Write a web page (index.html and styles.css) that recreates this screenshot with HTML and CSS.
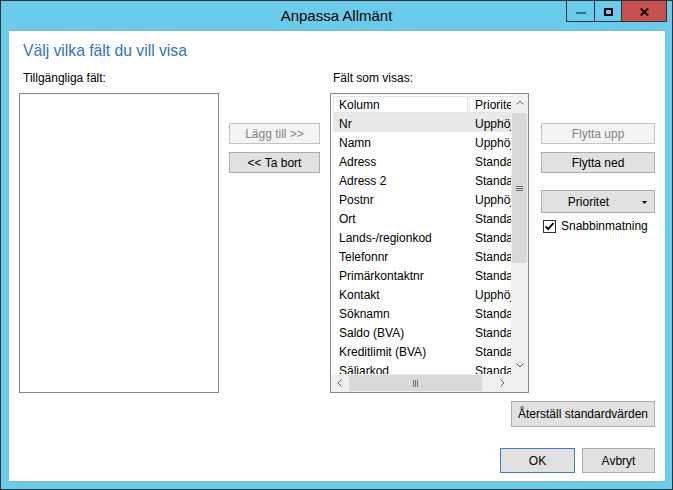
FILE: index.html
```html
<!DOCTYPE html>
<html lang="sv">
<head>
<meta charset="utf-8">
<title>Anpassa Allmänt</title>
<link rel="stylesheet" href="styles.css">
</head>
<body>
<div class="window">
  <div class="titlebar">
    <div class="title">Anpassa Allmänt</div>
    <div class="caption-buttons">
      <div class="cb cb-min"><span class="min-glyph"></span></div>
      <div class="cb cb-max"><span class="max-glyph"></span></div>
      <div class="cb cb-close">
        <svg class="close-glyph" width="9" height="8" viewBox="0 0 9 8"><path d="M0.8 0.6 L8.2 7.4 M8.2 0.6 L0.8 7.4" stroke="#000" stroke-width="2" fill="none"/></svg>
      </div>
    </div>
  </div>
  <div class="client">
    <h1 class="instruction">Välj vilka fält du vill visa</h1>
    <div class="main">
      <div class="label label-left">Tillgängliga fält:</div>
      <div class="label label-right">Fält som visas:</div>
      <div class="listbox"></div>
      <div class="mid-buttons">
        <button class="btn btn-mid btn-disabled">Lägg till &gt;&gt;</button>
        <button class="btn btn-mid">&lt;&lt; Ta bort</button>
      </div>
      <div class="listview">
        <div class="lv-content">
          <div class="lv-header">
            <div class="lv-hcell c1">Kolumn</div>
            <div class="lv-hcell c2">Prioritet</div>
          </div>
          <div class="lv-row sel"><span class="c1">Nr</span><span class="c2">Upphöjd</span></div>
          <div class="lv-row"><span class="c1">Namn</span><span class="c2">Upphöjd</span></div>
          <div class="lv-row"><span class="c1">Adress</span><span class="c2">Standard</span></div>
          <div class="lv-row"><span class="c1">Adress 2</span><span class="c2">Standard</span></div>
          <div class="lv-row"><span class="c1">Postnr</span><span class="c2">Upphöjd</span></div>
          <div class="lv-row"><span class="c1">Ort</span><span class="c2">Standard</span></div>
          <div class="lv-row"><span class="c1">Lands-/regionkod</span><span class="c2">Standard</span></div>
          <div class="lv-row"><span class="c1">Telefonnr</span><span class="c2">Standard</span></div>
          <div class="lv-row"><span class="c1">Primärkontaktnr</span><span class="c2">Standard</span></div>
          <div class="lv-row"><span class="c1">Kontakt</span><span class="c2">Upphöjd</span></div>
          <div class="lv-row"><span class="c1">Söknamn</span><span class="c2">Standard</span></div>
          <div class="lv-row"><span class="c1">Saldo (BVA)</span><span class="c2">Standard</span></div>
          <div class="lv-row"><span class="c1">Kreditlimit (BVA)</span><span class="c2">Standard</span></div>
          <div class="lv-row"><span class="c1">Säljarkod</span><span class="c2">Standard</span></div>
        </div>
        <div class="vscroll">
          <div class="sb-arrow"><svg width="8" height="5" viewBox="0 0 8 5"><polyline points="0.5,4.5 4,1 7.5,4.5" fill="none" stroke="#606060" stroke-width="1"/></svg></div>
          <div class="vthumb"><span class="vgrip"></span></div>
          <div class="sb-fill"></div>
          <div class="sb-arrow"><svg width="8" height="5" viewBox="0 0 8 5"><polyline points="0.5,0.5 4,4 7.5,0.5" fill="none" stroke="#606060" stroke-width="1"/></svg></div>
        </div>
        <div class="hscroll">
          <div class="sb-arrow sb-harrow"><svg width="5" height="8" viewBox="0 0 5 8"><polyline points="4.5,0.5 1,4 4.5,7.5" fill="none" stroke="#606060" stroke-width="1"/></svg></div>
          <div class="hthumb"><span class="hgrip"></span></div>
          <div class="sb-fill"></div>
          <div class="sb-arrow sb-harrow"><svg width="5" height="8" viewBox="0 0 5 8"><polyline points="0.5,0.5 4,4 0.5,7.5" fill="none" stroke="#606060" stroke-width="1"/></svg></div>
        </div>
        <div class="corner"></div>
      </div>
      <div class="side">
        <button class="btn btn-side btn-disabled">Flytta upp</button>
        <button class="btn btn-side btn-down">Flytta ned</button>
        <button class="btn btn-side btn-prio"><span class="prio-text">Prioritet</span><span class="prio-arrow"><svg width="5" height="3" viewBox="0 0 5 3"><polygon points="0,0 5,0 2.5,3" fill="#000"/></svg></span></button>
        <label class="check-row">
          <span class="checkbox"><svg width="11" height="11" viewBox="0 0 11 11"><path d="M1.6 5.4 L4.2 8.2 L9.4 2.2" fill="none" stroke="#000" stroke-width="1.9"/></svg></span>
          <span>Snabbinmatning</span>
        </label>
      </div>
    </div>
    <div class="reset-row"><button class="btn btn-reset">Återställ standardvärden</button></div>
    <div class="footer">
      <button class="btn btn-ok">OK</button>
      <button class="btn btn-cancel">Avbryt</button>
    </div>
  </div>
</div>
</body>
</html>
```
FILE: styles.css
```css
* { box-sizing: border-box; }
html, body { margin: 0; padding: 0; }
body {
  width: 673px;
  height: 490px;
  overflow: hidden;
  font-family: "Liberation Sans", Arial, sans-serif;
  font-size: 12px;
  color: #000;
  background: #333;
}
.window {
  width: 673px;
  height: 490px;
  border: 1px solid #333;
  background: #6acbea;
  display: flex;
  flex-direction: column;
}
.titlebar {
  flex: none;
  height: 29px;
  display: grid;
  grid-template-columns: 1fr auto 1fr;
}
.title {
  grid-column: 2;
  font-size: 15px;
  line-height: 28px;
  padding-top: 1px;
  white-space: nowrap;
  color: #000;
}
.caption-buttons {
  grid-column: 3;
  justify-self: end;
  align-self: start;
  margin-top: -1px;
  margin-right: 5px;
  height: 22px;
  display: flex;
  border: 1px solid #333;
}
.cb {
  height: 20px;
  display: flex;
  justify-content: center;
  align-items: flex-start;
}
.cb-min { width: 27px; }
.cb-max { width: 27px; border-left: 1px solid #333; }
.cb-close { width: 45px; border-left: 1px solid #333; background: #c75050; }
.min-glyph {
  width: 10px;
  height: 2px;
  margin-top: 11px;
  background: #356f87;
}
.max-glyph {
  width: 9px;
  height: 8px;
  margin-top: 7px;
  border: 2px solid #000;
}
.close-glyph { margin-top: 7px; display: block; }

.client {
  flex: none;
  height: 452px;
  margin: 0 7px 0 8px;
  background: #fff;
  border-top: 1px solid #78b4cf;
  border-bottom: 1px solid #78b4cf;
  padding: 10px 10px 8px 10px;
  display: flex;
  flex-direction: column;
}
.instruction {
  margin: 0;
  padding-left: 4px;
  font-size: 15.7px;
  line-height: 20px;
  font-weight: normal;
  color: #2f74c6;
}
.main {
  margin-top: 10px;
  display: grid;
  grid-template-columns: 200px 91px 199px 116px;
  grid-template-rows: 15px 300px;
  column-gap: 10px;
  row-gap: 7px;
}
.label { line-height: 15px; white-space: nowrap; }
.label-left { grid-column: 1; grid-row: 1; padding-left: 4px; }
.label-right { grid-column: 3; grid-row: 1; padding-left: 3px; }
.listbox {
  grid-column: 1;
  grid-row: 2;
  border: 1px solid #828790;
  background: #fff;
}
.mid-buttons {
  grid-column: 2;
  grid-row: 2;
  display: flex;
  flex-direction: column;
  padding-top: 30px;
  gap: 8px;
}
.btn {
  font-family: "Liberation Sans", Arial, sans-serif;
  font-size: 12px;
  line-height: 15px;
  color: #000;
  background: #e1e1e1;
  border: 1px solid #adadad;
  margin: 0;
  padding: 1px 0 0 0;
  display: flex;
  align-items: center;
  justify-content: center;
  white-space: nowrap;
}
.btn-disabled {
  background: #f4f4f4;
  border-color: #c4c4c4;
  color: #838383;
}
.btn-mid { width: 91px; height: 21px; }

.listview {
  grid-column: 3;
  grid-row: 2;
  border: 1px solid #828790;
  background: #fff;
  display: grid;
  grid-template-columns: 180px 17px;
  grid-template-rows: 1fr 18px;
}
.lv-content {
  overflow: hidden;
  min-width: 0;
  padding: 2px 0 0 2px;
}
.lv-header { display: flex; height: 17px; }
.lv-hcell {
  flex: none;
  height: 17px;
  border: 1px solid #e3e3e3;
  padding-top: 1px;
  line-height: 14px;
  padding-left: 5px;
  white-space: nowrap;
  overflow: hidden;
}
.lv-hcell.c1 { width: 135px; margin-right: 1px; }
.lv-hcell.c2 { width: 80px; }
.lv-row {
  display: flex;
  height: 19px;
  padding-top: 3px;
  line-height: 16px;
  white-space: nowrap;
}
.lv-row.sel { background: #e8e8e8; }
.lv-row .c1 { flex: none; width: 136px; padding-left: 6px; }
.lv-row .c2 { flex: none; width: 80px; padding-left: 6px; }

.vscroll {
  grid-column: 2;
  grid-row: 1;
  background: #f0f0f0;
  display: flex;
  flex-direction: column;
}
.sb-arrow {
  flex: none;
  height: 17px;
  display: flex;
  align-items: center;
  justify-content: center;
}
.sb-arrow svg { display: block; }
.sb-harrow { width: 17px; height: auto; }
.sb-fill { flex: 1; }
.vthumb {
  flex: none;
  height: 150px;
  margin: 2px 1px 0 1px;
  background: #d9d9d9;
  display: flex;
  align-items: center;
  justify-content: center;
}
.vgrip {
  width: 7px;
  height: 5px;
  border-top: 1px solid #6e6e6e;
  border-bottom: 1px solid #6e6e6e;
  background: linear-gradient(#6e6e6e, #6e6e6e) center / 7px 1px no-repeat;
}
.hscroll {
  grid-column: 1;
  grid-row: 2;
  background: #f0f0f0;
  display: flex;
}
.hthumb {
  flex: none;
  width: 133px;
  margin: 1px 0 1px 1px;
  background: #d9d9d9;
  display: flex;
  align-items: center;
  justify-content: center;
}
.hgrip {
  width: 5px;
  height: 7px;
  border-left: 1px solid #6e6e6e;
  border-right: 1px solid #6e6e6e;
  background: linear-gradient(#6e6e6e, #6e6e6e) center / 1px 7px no-repeat;
}
.corner { grid-column: 2; grid-row: 2; background: #f0f0f0; }

.side {
  grid-column: 4;
  grid-row: 2;
  padding-left: 2px;
  padding-top: 30px;
  display: flex;
  flex-direction: column;
}
.btn-side { width: 114px; height: 21px; }
.btn-down { margin-top: 8px; }
.btn-prio {
  margin-top: 17px;
  height: 23px;
  justify-content: flex-start;
}
.prio-text { flex: 1; text-align: center; }
.prio-arrow {
  width: 19px;
  display: flex;
  justify-content: center;
  align-items: center;
  padding-right: 1px;
}
.prio-arrow svg { display: block; }
.check-row {
  margin-top: 6px;
  display: flex;
  align-items: center;
  gap: 5px;
  line-height: 15px;
  padding-left: 2px;
}
.checkbox {
  flex: none;
  width: 13px;
  height: 13px;
  border: 1px solid #333;
  background: #fff;
  display: flex;
  align-items: center;
  justify-content: center;
}
.checkbox svg { display: block; }

.reset-row {
  margin-top: 8px;
  display: flex;
  justify-content: flex-end;
}
.btn-reset { width: 144px; height: 26px; }
.footer {
  margin-top: 21px;
  display: flex;
  justify-content: flex-end;
  gap: 7px;
}
.btn-ok { width: 75px; height: 25px; border-color: #3a80c6; }
.btn-cancel { width: 73px; height: 25px; }
```
